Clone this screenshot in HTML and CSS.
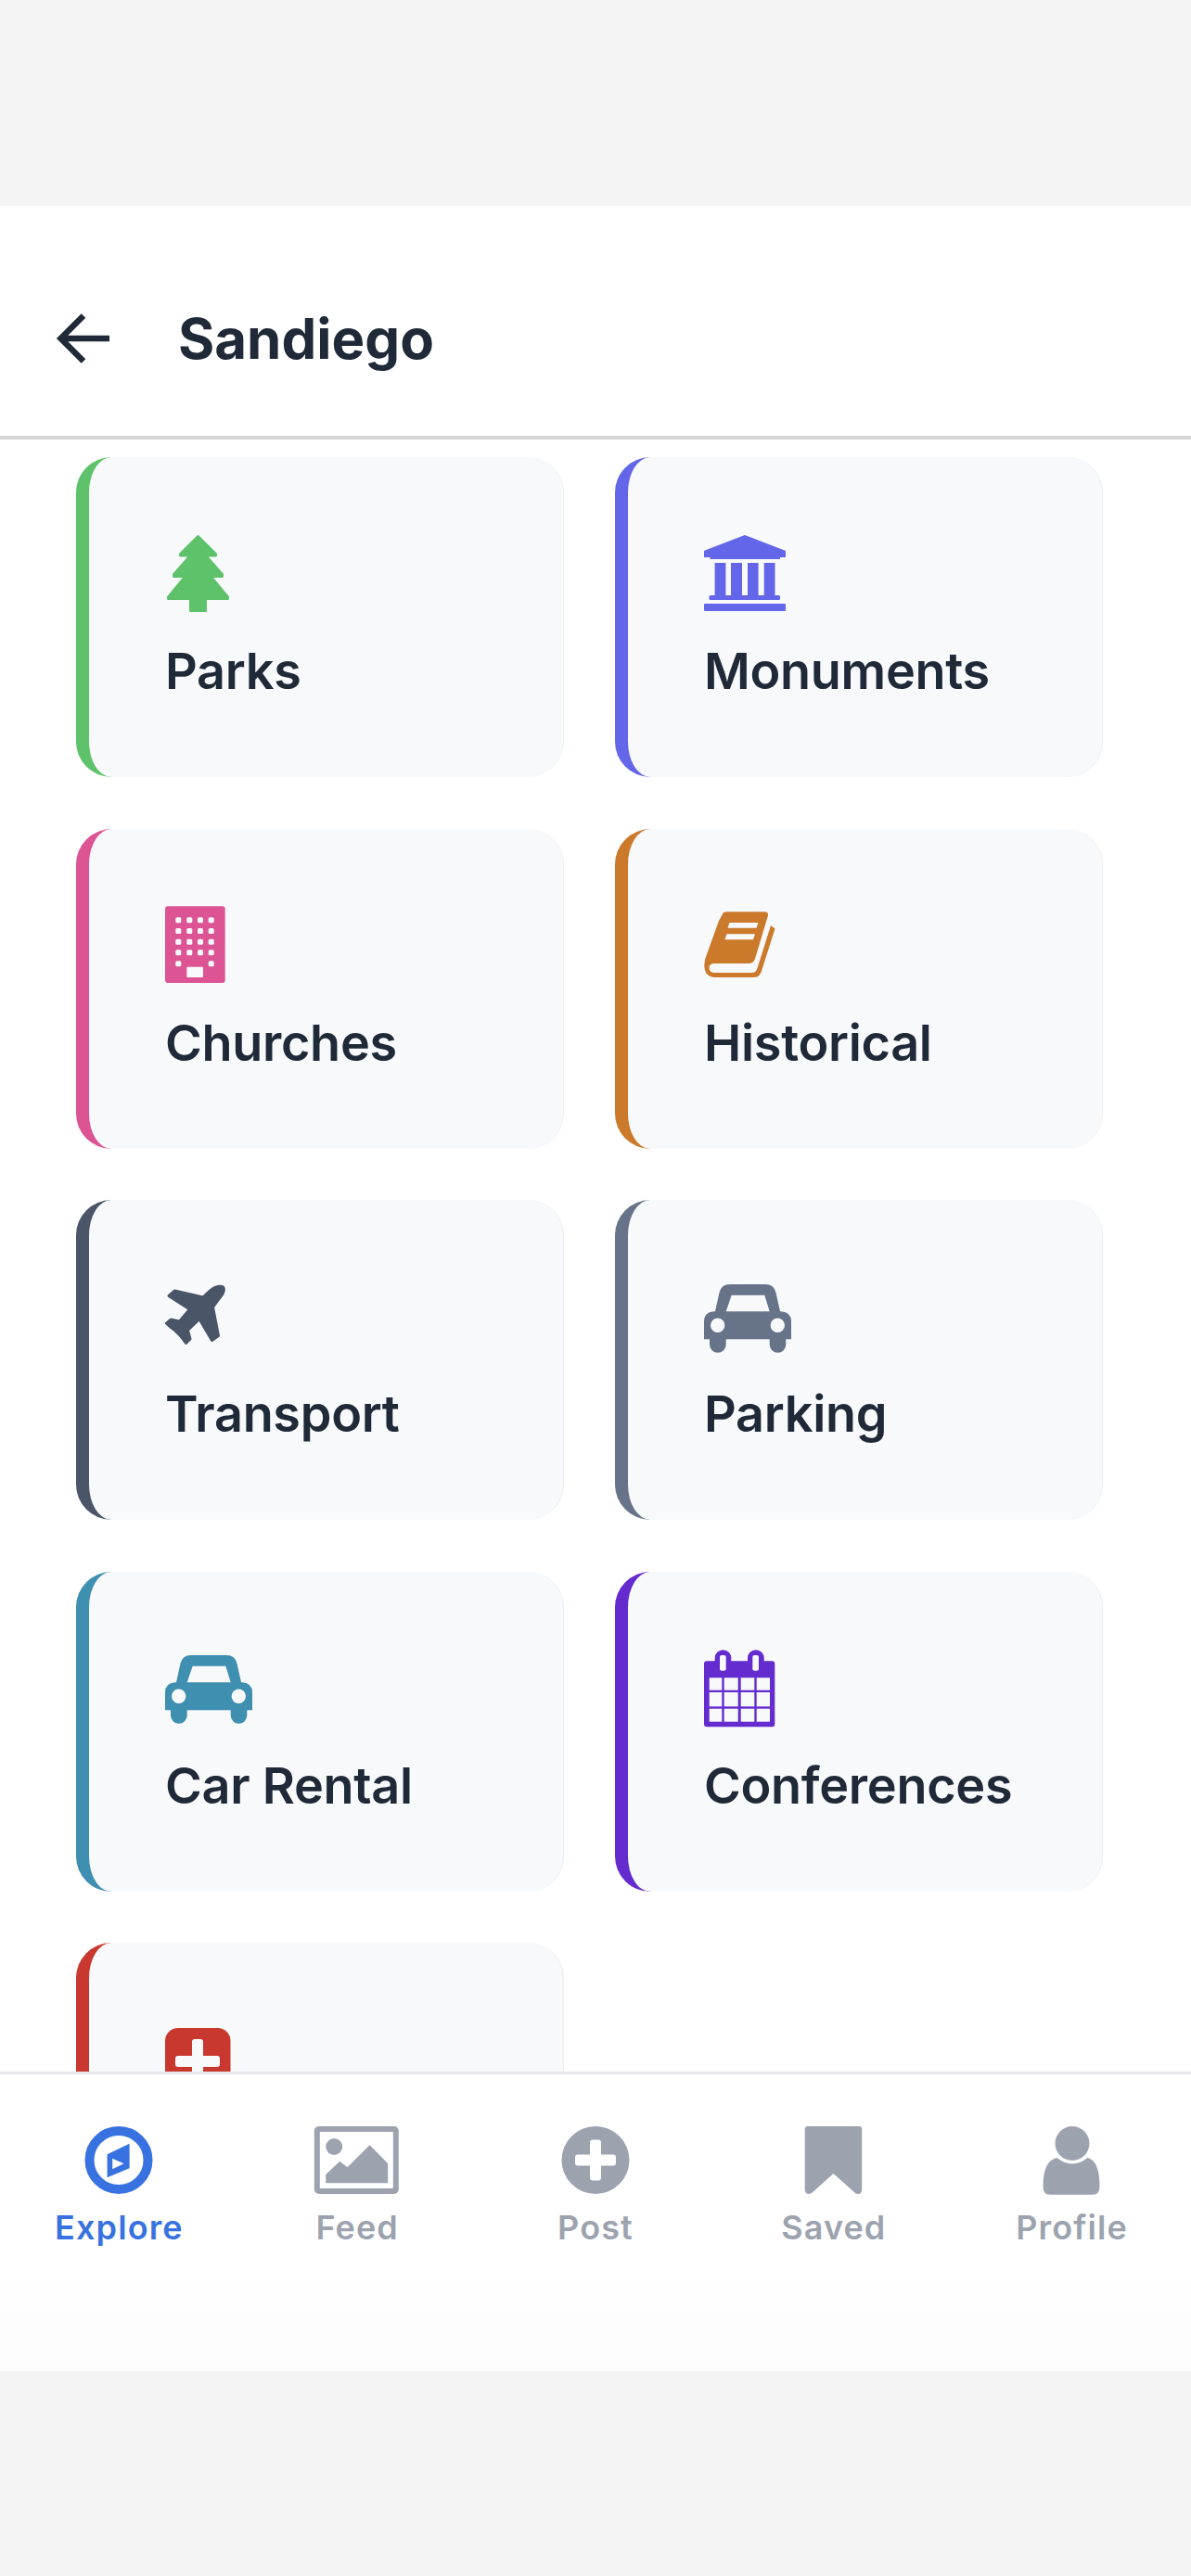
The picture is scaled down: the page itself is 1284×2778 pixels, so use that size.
FILE: index.html
```html
<!DOCTYPE html>
<html lang="en">
<head>
    <meta charset="UTF-8">
    <meta name="viewport" content="width=device-width, initial-scale=1.0">
    <title>Sandiego</title>
    <link rel="stylesheet" href="styles.css">
</head>
<body>
    <svg class="defs" width="0" height="0" aria-hidden="true">
        <symbol id="car" viewBox="0 0 100 90">
            <path fill="currentColor" fill-rule="evenodd" d="M0 69.3V50Q0 40 11 39.3H12L16.5 19Q18.5 10 28 10H66Q75.5 10 77.5 19L82 39.3H83Q94 40 94 50V69.3H88.3V75A8.8 8.8 0 0 1 70.7 75V69.3H23.7V75A8.8 8.8 0 0 1 6 75V69.3ZM29.7 21.7L23.7 39.3H70.7L65.3 21.7ZM22.4 54.3A7.7 7.7 0 1 0 7 54.3A7.7 7.7 0 1 0 22.4 54.3ZM87 54.3A7.7 7.7 0 1 0 71.6 54.3A7.7 7.7 0 1 0 87 54.3Z"/>
        </symbol>
    </svg>

    <div class="status-area"></div>

    <div class="app">
        <header class="top-bar">
            <svg class="back-icon" viewBox="0 0 60 60">
                <path d="M58 30H7M30 5.5L5.5 30L30 54.5"/>
            </svg>
            <h1 class="page-title">Sandiego</h1>
        </header>

        <main class="content">
            <div class="category-grid">
                <div class="category-card parks">
                    <svg class="card-icon" viewBox="0 0 100 90">
                        <path class="soft" d="M35.5 4.5L54.5 23.5V25H43.5L61.5 45.5V47.5H49L67.5 70V71.5H43.5V84.5H27.5V71.5H3.5V70L22 47.5H9.5V45.5L27.5 25H16.5V23.5Z"/>
                    </svg>
                    <div class="card-label">Parks</div>
                </div>

                <div class="category-card monuments">
                    <svg class="card-icon" viewBox="0 0 100 90">
                        <path d="M44 3L88 20V27H82V29H6.5V27H0V20Z"/>
                        <rect x="11.6" y="33" width="11.8" height="35"/>
                        <rect x="29" y="33" width="12" height="35"/>
                        <rect x="47" y="33" width="11.6" height="35"/>
                        <rect x="64.7" y="33" width="11.8" height="35"/>
                        <rect x="5.5" y="68" width="76.5" height="5" rx="1.5"/>
                        <rect x="0" y="77" width="88" height="8" rx="1"/>
                    </svg>
                    <div class="card-label">Monuments</div>
                </div>

                <div class="category-card churches">
                    <svg class="card-icon" viewBox="0 0 100 90">
                        <rect x="0" y="3.3" width="64.7" height="82.7" rx="3"/>
                        <g class="cut">
                            <rect x="11.3" y="15.3" width="6" height="6" rx="1.5"/>
                            <rect x="23.3" y="15.3" width="6" height="6" rx="1.5"/>
                            <rect x="35" y="15.3" width="6" height="6" rx="1.5"/>
                            <rect x="46.7" y="15.3" width="6" height="6" rx="1.5"/>
                            <rect x="11.3" y="27" width="6" height="6" rx="1.5"/>
                            <rect x="23.3" y="27" width="6" height="6" rx="1.5"/>
                            <rect x="35" y="27" width="6" height="6" rx="1.5"/>
                            <rect x="46.7" y="27" width="6" height="6" rx="1.5"/>
                            <rect x="11.3" y="38.7" width="6" height="6" rx="1.5"/>
                            <rect x="23.3" y="38.7" width="6" height="6" rx="1.5"/>
                            <rect x="35" y="38.7" width="6" height="6" rx="1.5"/>
                            <rect x="46.7" y="38.7" width="6" height="6" rx="1.5"/>
                            <rect x="11.3" y="50.3" width="6" height="6" rx="1.5"/>
                            <rect x="23.3" y="50.3" width="6" height="6" rx="1.5"/>
                            <rect x="35" y="50.3" width="6" height="6" rx="1.5"/>
                            <rect x="46.7" y="50.3" width="6" height="6" rx="1.5"/>
                            <rect x="11.3" y="62.3" width="6" height="6" rx="1.5"/>
                            <rect x="46.7" y="62.3" width="6" height="6" rx="1.5"/>
                            <rect x="23.3" y="68.7" width="17.7" height="11.3" rx="1"/>
                        </g>
                    </svg>
                    <div class="card-label">Churches</div>
                </div>

                <div class="category-card historical">
                    <svg class="card-icon" viewBox="0 0 100 90">
                        <path d="M21 10L24 9.3H65Q70 9.3 68.8 14L55 60Q53.5 64.5 49 65H12Q5.5 65 5.5 69.5Q5.5 75 12 75H52Q56 75 57.5 70L72 24L76.5 27.5L63 70Q61 80 54 80H12Q1 80 0.3 68Q0 62 3 55L16 19Z"/>
                        <g class="cut">
                            <path d="M27.5 21H58.5L56.5 26.7H25.5Z"/>
                            <path d="M24.5 33.3H55L53 39.3H22.5Z"/>
                        </g>
                    </svg>
                    <div class="card-label">Historical</div>
                </div>

                <div class="category-card transport">
                    <svg class="card-icon" viewBox="0 0 100 90">
                        <path class="soft" d="M62.5 13Q64.5 15 62 20.5Q60 23 51.5 34.5L57.5 65.5L50.5 70.5L37 47.5L24.5 59.5L27 69L22.5 73.5Q17 65 11 60Q5 56 1.5 52L6 48L15.5 50L26.5 37L4 22.5L10.5 17L41 24Q50 15 54 13.5Q59 11.5 62.5 13Z"/>
                    </svg>
                    <div class="card-label">Transport</div>
                </div>

                <div class="category-card parking">
                    <svg class="card-icon"><use href="#car" width="100" height="90"/></svg>
                    <div class="card-label">Parking</div>
                </div>

                <div class="category-card rental">
                    <svg class="card-icon"><use href="#car" width="100" height="90"/></svg>
                    <div class="card-label">Car Rental</div>
                </div>

                <div class="category-card conferences">
                    <svg class="card-icon" viewBox="0 0 100 90">
                        <path d="M3 16.3H11.7V13A8.8 8.8 0 0 1 29.3 13V16.3H47V13A8.8 8.8 0 0 1 64.7 13V16.3H73.3Q76.3 16.3 76.3 19.3V84.3Q76.3 87.3 73.3 87.3H3Q0 87.3 0 84.3V19.3Q0 16.3 3 16.3Z"/>
                        <g class="cut">
                            <rect x="17" y="10" width="6.7" height="16.7" rx="2"/>
                            <rect x="52.3" y="10" width="6.7" height="16.7" rx="2"/>
                            <rect x="5.7" y="34.3" width="13.6" height="13.4"/>
                            <rect x="21.7" y="34.3" width="15" height="13.4"/>
                            <rect x="39.7" y="34.3" width="14.6" height="13.4"/>
                            <rect x="56.7" y="34.3" width="14.3" height="13.4"/>
                            <rect x="5.7" y="50" width="13.6" height="15.3"/>
                            <rect x="21.7" y="50" width="15" height="15.3"/>
                            <rect x="39.7" y="50" width="14.6" height="15.3"/>
                            <rect x="56.7" y="50" width="14.3" height="15.3"/>
                            <rect x="5.7" y="67.7" width="13.6" height="14"/>
                            <rect x="21.7" y="67.7" width="15" height="14"/>
                            <rect x="39.7" y="67.7" width="14.6" height="14"/>
                            <rect x="56.7" y="67.7" width="14.3" height="14"/>
                        </g>
                    </svg>
                    <div class="card-label">Conferences</div>
                </div>

                <div class="category-card hospitals">
                    <svg class="card-icon" viewBox="0 0 100 90">
                        <rect x="0" y="11" width="70.5" height="72" rx="14"/>
                        <g class="cut">
                            <rect x="29" y="23" width="12" height="48" rx="3"/>
                            <rect x="11" y="41" width="48" height="12" rx="3"/>
                        </g>
                    </svg>
                </div>
            </div>
        </main>

        <nav class="tab-bar">
            <div class="tab active">
                <svg class="tab-icon" viewBox="0 0 100 80">
                    <circle cx="50" cy="39.5" r="31.5" fill="none" stroke="currentColor" stroke-width="10"/>
                    <path fill-rule="evenodd" d="M61.6 21.7V48.3L37.6 58.3V33.3ZM43.2 37.7V49.3L55.5 43.3Z"/>
                </svg>
                <span class="tab-label">Explore</span>
            </div>
            <div class="tab">
                <svg class="tab-icon" viewBox="0 0 100 80">
                    <rect x="6.8" y="6" width="85" height="67" rx="2" fill="none" stroke="currentColor" stroke-width="6"/>
                    <circle cx="25.2" cy="25" r="9"/>
                    <path d="M16.2 64.3V55L31.3 40.7L39.5 47.3L63.6 23.3L83.2 43.3V64.3Z"/>
                </svg>
                <span class="tab-label">Feed</span>
            </div>
            <div class="tab">
                <svg class="tab-icon" viewBox="0 0 100 80">
                    <circle cx="50" cy="39.5" r="36.5"/>
                    <rect class="tab-cut" x="44" y="17.5" width="12" height="44" rx="3"/>
                    <rect class="tab-cut" x="28" y="33.5" width="44" height="12" rx="3"/>
                </svg>
                <span class="tab-label">Post</span>
            </div>
            <div class="tab">
                <svg class="tab-icon" viewBox="0 0 100 80">
                    <path d="M21.7 3H77.2Q80.2 3 80.2 6V71Q80.2 76 76 76Q73.5 76 71.5 73.7L49.5 54L27.5 73.7Q25.5 76 23 76Q18.7 76 18.7 71V6Q18.7 3 21.7 3Z"/>
                </svg>
                <span class="tab-label">Saved</span>
            </div>
            <div class="tab">
                <svg class="tab-icon" viewBox="0 0 100 80">
                    <circle cx="50" cy="21.5" r="18.5"/>
                    <path d="M33.5 37Q50 50 66.5 37Q79.5 40 79.5 68Q79.5 76.7 72 76.7H26Q18.5 76.7 18.5 68Q18.5 40 33.5 37Z"/>
                </svg>
                <span class="tab-label">Profile</span>
            </div>
        </nav>
    </div>

    <div class="bottom-area"></div>
</body>
</html>
```

FILE: styles.css
```css
:root {
    --text: #1f2937;
    --muted: #9ca3af;
    --blue: #3872e0;
    --card-bg: #f8f9fb;
    --page-bg: #f4f4f4;
}

* {
    box-sizing: border-box;
}

body {
    margin: 0;
    height: 2778px;
    overflow: hidden;
    display: flex;
    flex-direction: column;
    background-color: var(--page-bg);
    font-family: Inter, "Liberation Sans", sans-serif;
    color: var(--text);
}

.defs {
    display: block;
    height: 0;
}

.status-area {
    height: 222px;
}

.bottom-area {
    flex: 1;
}

.app {
    height: 2335px;
    display: flex;
    flex-direction: column;
    background-color: #fff;
}

/* header */
.top-bar {
    height: 252px;
    flex-shrink: 0;
    display: flex;
    align-items: center;
    gap: 72px;
    padding: 38px 0 0 60px;
    border-bottom: 4px solid #d6d6d6;
}

.back-icon {
    width: 60px;
    height: 60px;
    fill: none;
    stroke: var(--text);
    stroke-width: 6.5;
}

.page-title {
    margin: 0;
    font-size: 60px;
    line-height: 72px;
    font-weight: 700;
}

/* cards */
.content {
    flex: 1;
    min-height: 0;
    overflow: hidden;
    padding: 19px 0 0 82px;
}

.category-grid {
    display: grid;
    grid-template-columns: 526px 526px;
    grid-auto-rows: 345px;
    column-gap: 55px;
    row-gap: 55.5px;
}

.category-card {
    padding: 80.5px 0 0 82px;
    background-color: var(--card-bg);
    border-right: 1px solid color-mix(in srgb, var(--accent) 7%, transparent);
    border-left: 14px solid var(--accent);
    border-radius: 38px;
}

.card-icon {
    display: block;
    width: 100px;
    height: 90px;
    fill: var(--accent);
}

.card-icon .cut {
    fill: var(--card-bg);
}

.card-icon .soft {
    stroke: var(--accent);
    stroke-width: 3;
    stroke-linejoin: round;
}

.card-label {
    margin-top: 28.5px;
    font-size: 54px;
    line-height: 64px;
    font-weight: 600;
    letter-spacing: -0.3px;
}

.parks { --accent: #5dc26a; }
.monuments { --accent: #6366e9; }
.churches { --accent: #dc5494; }
.historical { --accent: #cb7a2b; }
.transport { --accent: #4a5568; }
.parking { --accent: #667389; }
.rental { --accent: #3f8fb0; }
.conferences { --accent: #642bcf; }
.hospitals { --accent: #c9382e; }

.parking .card-icon,
.rental .card-icon {
    color: var(--accent);
}

/* bottom tabs */
.tab-bar {
    height: 323px;
    flex-shrink: 0;
    display: grid;
    grid-template-columns: repeat(5, 1fr);
    padding-top: 53px;
    border-top: 3px solid #e5e7eb;
    background: linear-gradient(#fff 60%, #fcfcfc);
}

.tab {
    display: flex;
    flex-direction: column;
    align-items: center;
    color: var(--muted);
}

.tab.active {
    color: var(--blue);
}

.tab-icon {
    display: block;
    width: 100px;
    height: 80px;
    fill: currentColor;
}

.tab-cut {
    fill: #fff;
}

.tab-label {
    margin-top: 10px;
    font-size: 36px;
    line-height: 44px;
    font-weight: 600;
    letter-spacing: 1.1px;
}
```
